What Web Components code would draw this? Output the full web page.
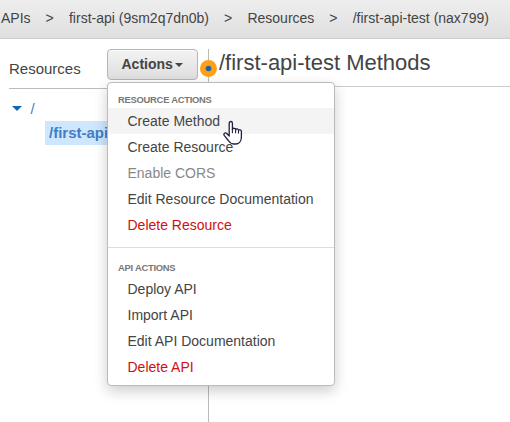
<!DOCTYPE html>
<html lang="en">
<head>
<meta charset="utf-8">
<title>API Resources</title>
<style>
html,body{margin:0;height:100%;overflow:hidden;background:#fff;font-family:"Liberation Sans",Arial,sans-serif;color:#444}
</style>
</head>
<body>
<api-console></api-console>
<script>
const define = (name, html) => customElements.define(name, class extends HTMLElement {
  constructor() {
    super();
    const t = document.createElement('template');
    t.innerHTML = html;
    this.attachShadow({mode: 'open'}).append(t.content.cloneNode(true));
  }
});

define('bread-crumbs', `<style>
:host{display:flex;box-sizing:border-box;height:39px;padding:0 0 2px 1px;align-items:center;font-size:14px;line-height:16px;white-space:pre;color:#444;background:linear-gradient(#eee,#dfdfdf);border-bottom:1px solid #ccc}
</style><slot></slot>`);

define('crumb-item', `<style>
:host{display:flex}
:host(:not([last]))::after{content:">";width:8px;margin:0 15.4px 0 15px}
</style><slot></slot>`);

define('actions-button', `<style>
:host{display:flex;box-sizing:border-box;width:91px;height:31px;padding:0 0 1px 13.5px;align-items:center;border:1px solid #b5b5b5;border-radius:4px;background:linear-gradient(#f3f3f3,#dedede);box-shadow:inset 0 1px #fafafa;font:bold 14px/16px "Liberation Sans",Arial,sans-serif;color:#444}
i{margin:1px 0 0 2px;border:4px solid transparent;border-top-color:#444;border-bottom:0}
</style><slot></slot><i></i>`);

define('resource-tree', `<style>
:host{display:block;font-size:15px;line-height:24px;color:#3f7fc4}
.root{display:flex;align-items:center;padding-left:3px;height:24px}
.root i{border:5px solid transparent;border-top-color:#1463be;border-bottom:0;margin:0 8.5px 1px 0}
.child{margin:0 0 0 36px;padding-left:4px;height:24px;background:#cfe6ff;font-weight:bold;white-space:nowrap;overflow:hidden}
</style><div class="root"><i></i><slot name="root"></slot></div><div class="child"><slot></slot></div>`);

define('menu-group', `<style>
:host{display:block;padding:9px 0 9px}
:host([divided]){border-top:1px solid #ddd;padding-top:12px}
h3{margin:0;padding:0 10px;height:16px;font:bold 9.4px/15px "Liberation Sans",Arial,sans-serif;letter-spacing:-.25px;color:#777}
:host([divided]) h3{line-height:16px}
</style><h3><slot name="label"></slot></h3><slot></slot>`);

define('menu-item', `<style>
:host{display:block;height:26px;padding-left:19.5px;font-size:14px;line-height:26px;white-space:nowrap;color:#444}
:host([active]){background:#f4f4f4}
:host([disabled]){color:#888}
:host([danger]){color:#d01012}
</style><slot></slot>`);

define('actions-menu', `<style>
:host{display:block;box-sizing:border-box;position:absolute;left:107px;top:82px;width:228px;height:304px;z-index:3;background:#fff;border:1px solid #bbb;border-radius:4px;box-shadow:0 5px 14px rgba(0,0,0,.2)}
</style><slot></slot>`);

define('pane-handle', `<style>
:host{position:absolute;left:200px;top:60px;width:17px;height:17px;z-index:2}
svg{display:block}
</style><svg width="17" height="17"><circle cx="8.5" cy="8.5" r="8.5" fill="#ff9f14"/><circle cx="8.5" cy="8.5" r="2.8" fill="#1464b8"/></svg>`);

define('hand-cursor', `<style>
:host{position:absolute;left:223px;top:120px;z-index:4}
svg{display:block}
</style><svg width="20" height="26" viewBox="0 0 20 26"><path d="M6.2 16V3.3C6.2.9 9.4.9 9.4 3.3V9.3C10.1 7.8 12.4 8 12.6 9.5C13.4 8.4 15.4 8.8 15.5 10.3C16.2 9.5 18.4 9.8 18.4 11.5V17C18.4 21 16 24 12.5 24H10.8C8.4 24 6.9 22.8 5.3 20.5L1.2 15.4C.2 13.5 2.2 12.2 3.8 13.5L6.2 16Z" fill="#fff" stroke="#20203a" stroke-width="1.3" stroke-linejoin="round"/><path d="M9.4 9V13.2M12.6 9.5V13.2M15.5 10.3V13.5" fill="none" stroke="#20203a" stroke-width="1.1"/></svg>`);

define('api-console', `<style>
:host{display:flex;flex-direction:column;position:relative;width:510px;height:422px;overflow:hidden}
main{display:flex;flex:1;padding-top:10px}
aside{box-sizing:border-box;width:209px;padding-left:9px;border-right:1px solid #bbb}
.bar{display:flex;justify-content:space-between;height:39px;border-bottom:1px solid #bbb;padding-right:10px}
.bar span{font-size:15px;line-height:20px;padding-top:10px}
resource-tree{margin-top:8px}
section{flex:1}
h1{margin:0;box-sizing:border-box;height:38px;padding-left:10px;border-bottom:1px solid #ccc;font-size:22px;line-height:27px;font-weight:normal;white-space:nowrap}
</style>
<bread-crumbs><crumb-item>APIs</crumb-item><crumb-item>first-api (9sm2q7dn0b)</crumb-item><crumb-item>Resources</crumb-item><crumb-item last>/first-api-test (nax799)</crumb-item></bread-crumbs>
<main><aside><div class="bar"><span>Resources</span><actions-button>Actions</actions-button></div>
<resource-tree><span slot="root">/</span>/first-api</resource-tree></aside>
<section><h1>/first-api-test Methods</h1></section></main>
<pane-handle></pane-handle>
<actions-menu>
<menu-group><span slot="label">RESOURCE ACTIONS</span><menu-item active>Create Method</menu-item><menu-item>Create Resource</menu-item><menu-item disabled>Enable CORS</menu-item><menu-item>Edit Resource Documentation</menu-item><menu-item danger>Delete Resource</menu-item></menu-group>
<menu-group divided><span slot="label">API ACTIONS</span><menu-item>Deploy API</menu-item><menu-item>Import API</menu-item><menu-item>Edit API Documentation</menu-item><menu-item danger>Delete API</menu-item></menu-group>
</actions-menu>
<hand-cursor></hand-cursor>`);
</script>
</body>
</html>
